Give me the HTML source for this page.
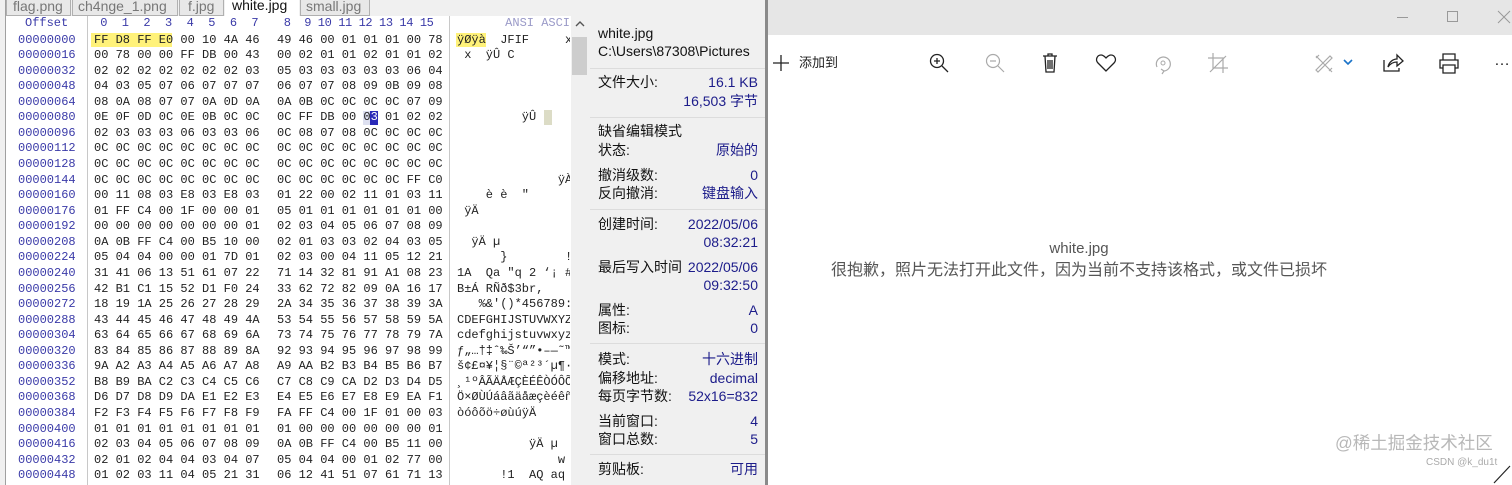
<!DOCTYPE html>
<html><head><meta charset="utf-8">
<style>
*{margin:0;padding:0;box-sizing:border-box}
body{width:1512px;height:485px;overflow:hidden;background:#fff;position:relative;font-family:"Liberation Sans","Noto Sans CJK SC",sans-serif}
.a{position:absolute;white-space:pre}
.m{font-family:"Liberation Mono",monospace;font-size:12px;line-height:15.56px}
.off{color:#3a3aa8}
.hx{color:#222}
.pl{font-family:"Liberation Sans","Noto Sans CJK SC",sans-serif;font-size:14px;color:#111;line-height:18px}
.pv{color:#1c1c8a;text-align:right;right:0}
.sep{position:absolute;left:590px;width:175px;height:1px;background:#dcdcdc}
svg{position:absolute}
</style></head><body>
<div class="a" style="left:0;top:0;width:768px;height:16px;background:#f0f0f0"></div>
<div class="a" style="left:0;top:0;width:6px;height:485px;background:#f0f0f0;border-right:1px solid #a0a0a0"></div>
<div class="a" style="left:6px;top:-4px;width:65px;height:20px;border:1px solid #b0b0b0;background:#e8e8e8;font-size:14px;color:#777;padding-left:6px;line-height:18px">flag.png</div>
<div class="a" style="left:72px;top:-4px;width:106px;height:20px;border:1px solid #b0b0b0;background:#e8e8e8;font-size:14px;color:#777;padding-left:5px;line-height:18px">ch4nge_1.png</div>
<div class="a" style="left:179px;top:-4px;width:45px;height:20px;border:1px solid #b0b0b0;background:#e8e8e8;font-size:14px;color:#777;padding-left:8px;line-height:18px">f.jpg</div>
<div class="a" style="left:225px;top:-4px;width:74px;height:21px;background:#fff;font-size:14px;color:#111;padding-left:7px;line-height:18px">white.jpg</div>
<div class="a" style="left:300px;top:-4px;width:70px;height:20px;border:1px solid #b0b0b0;background:#e8e8e8;font-size:14px;color:#777;padding-left:5px;line-height:18px">small.jpg</div>
<div class="a" style="left:87px;top:16px;width:1px;height:469px;background:#c8c8c8"></div>
<div class="a" style="left:449px;top:16px;width:1px;height:469px;background:#c8c8c8"></div>
<div class="a m" style="left:25px;top:16px;color:#3a3aa8">Offset</div>
<div class="a m" style="left:93px;top:16px;color:#3a3aa8"> 0  1  2  3  4  5  6  7</div>
<div class="a m" style="left:277px;top:16px;color:#3a3aa8;letter-spacing:-0.4px"> 8  9 10 11 12 13 14 15</div>
<div class="a m" style="left:457px;top:16px;width:113px;overflow:hidden;color:#9a9ac8;text-align:right">   ANSI ASCI</div>
<div class="a" style="left:91px;top:33px;width:81px;height:14px;background:#fff27a"></div>
<div class="a" style="left:456px;top:33px;width:30px;height:14px;background:#fff27a"></div>
<div class="a" style="left:363px;top:111px;width:8px;height:14px;background:#dde0f0"></div>
<div class="a" style="left:370px;top:111px;width:8px;height:14px;background:#2a2ab8"></div>
<div class="a" style="left:544px;top:110px;width:8px;height:15px;background:#dcdcc6"></div>
<div class="a m off" style="left:18px;top:32.5px">00000000
00000016
00000032
00000048
00000064
00000080
00000096
00000112
00000128
00000144
00000160
00000176
00000192
00000208
00000224
00000240
00000256
00000272
00000288
00000304
00000320
00000336
00000352
00000368
00000384
00000400
00000416
00000432
00000448</div>
<div class="a m hx" style="left:94px;top:32.5px">FF D8 FF E0 00 10 4A 46
00 78 00 00 FF DB 00 43
02 02 02 02 02 02 02 03
04 03 05 07 06 07 07 07
08 0A 08 07 07 0A 0D 0A
0E 0F 0D 0C 0E 0B 0C 0C
02 03 03 03 06 03 03 06
0C 0C 0C 0C 0C 0C 0C 0C
0C 0C 0C 0C 0C 0C 0C 0C
0C 0C 0C 0C 0C 0C 0C 0C
00 11 08 03 E8 03 E8 03
01 FF C4 00 1F 00 00 01
00 00 00 00 00 00 00 01
0A 0B FF C4 00 B5 10 00
05 04 04 00 00 01 7D 01
31 41 06 13 51 61 07 22
42 B1 C1 15 52 D1 F0 24
18 19 1A 25 26 27 28 29
43 44 45 46 47 48 49 4A
63 64 65 66 67 68 69 6A
83 84 85 86 87 88 89 8A
9A A2 A3 A4 A5 A6 A7 A8
B8 B9 BA C2 C3 C4 C5 C6
D6 D7 D8 D9 DA E1 E2 E3
F2 F3 F4 F5 F6 F7 F8 F9
01 01 01 01 01 01 01 01
02 03 04 05 06 07 08 09
02 01 02 04 04 03 04 07
01 02 03 11 04 05 21 31</div>
<div class="a m hx" style="left:277px;top:32.5px">49 46 00 01 01 01 00 78
00 02 01 01 02 01 01 02
05 03 03 03 03 03 06 04
06 07 07 08 09 0B 09 08
0A 0B 0C 0C 0C 0C 07 09
0C FF DB 00 0<span style="color:#fff">3</span> 01 02 02
0C 08 07 08 0C 0C 0C 0C
0C 0C 0C 0C 0C 0C 0C 0C
0C 0C 0C 0C 0C 0C 0C 0C
0C 0C 0C 0C 0C 0C FF C0
01 22 00 02 11 01 03 11
05 01 01 01 01 01 01 00
02 03 04 05 06 07 08 09
02 01 03 03 02 04 03 05
02 03 00 04 11 05 12 21
71 14 32 81 91 A1 08 23
33 62 72 82 09 0A 16 17
2A 34 35 36 37 38 39 3A
53 54 55 56 57 58 59 5A
73 74 75 76 77 78 79 7A
92 93 94 95 96 97 98 99
A9 AA B2 B3 B4 B5 B6 B7
C7 C8 C9 CA D2 D3 D4 D5
E4 E5 E6 E7 E8 E9 EA F1
FA FF C4 00 1F 01 00 03
01 00 00 00 00 00 00 01
0A 0B FF C4 00 B5 11 00
05 04 04 00 01 02 77 00
06 12 41 51 07 61 71 13</div>
<div class="a m hx" style="left:457px;top:32.5px;width:113px;overflow:hidden;font-size:12px">ÿØÿà  JFIF     x
 x  ÿÛ C



         ÿÛ



              ÿÀ
    è è  "
 ÿÄ

  ÿÄ µ
      }        !
1A  Qa "q 2 ‘¡ #
B±Á RÑð$3br,
   %&amp;'()*456789:
CDEFGHIJSTUVWXYZ
cdefghijstuvwxyz
ƒ„…†‡ˆ‰Š’“”•–—˜™
š¢£¤¥¦§¨©ª²³´µ¶·
¸¹ºÂÃÄÅÆÇÈÉÊÒÓÔÕ
Ö×ØÙÚáâãäåæçèéêñ
òóôõö÷øùúÿÄ

          ÿÄ µ
              w
      !1  AQ aq</div>
<div class="a" style="left:571px;top:16px;width:17px;height:469px;background:#f0f0f0"></div>
<svg style="left:574px;top:19px" width="12" height="10"><path d="M2 7 L6 3 L10 7" stroke="#555" stroke-width="1.4" fill="none"/></svg>
<div class="a" style="left:572px;top:37px;width:15px;height:38px;background:#cdcdcd"></div>
<div class="a" style="left:588px;top:16px;width:177px;height:469px;background:#f0f0f0"></div>
<div class="a" style="left:765px;top:0;width:3px;height:485px;background:#8a8a8a"></div>
<div class="sep" style="top:68px"></div>
<div class="sep" style="top:117px"></div>
<div class="sep" style="top:209px"></div>
<div class="sep" style="top:343px"></div>
<div class="sep" style="top:454px"></div>
<div class="a" style="left:598px;top:0;width:160px;height:485px">
<div class="a pl" style="left:0;top:24px">white.jpg</div>
<div class="a pl" style="left:0;top:42px">C:\Users\87308\Pictures</div>
<div class="a pl" style="left:0;top:73px">文件大小:</div><div class="a pl pv" style="top:73px">16.1 KB</div>
<div class="a pl pv" style="top:92px">16,503 字节</div>
<div class="a pl" style="left:0;top:122px">缺省编辑模式</div>
<div class="a pl" style="left:0;top:141px">状态:</div><div class="a pl pv" style="top:141px">原始的</div>
<div class="a pl" style="left:0;top:166px">撤消级数:</div><div class="a pl pv" style="top:166px">0</div>
<div class="a pl" style="left:0;top:184px">反向撤消:</div><div class="a pl pv" style="top:184px">键盘输入</div>
<div class="a pl" style="left:0;top:215px">创建时间:</div><div class="a pl pv" style="top:215px">2022/05/06</div>
<div class="a pl pv" style="top:233px">08:32:21</div>
<div class="a pl" style="left:0;top:258px">最后写入时间</div><div class="a pl pv" style="top:258px">2022/05/06</div>
<div class="a pl pv" style="top:276px">09:32:50</div>
<div class="a pl" style="left:0;top:301px">属性:</div><div class="a pl pv" style="top:301px">A</div>
<div class="a pl" style="left:0;top:319px">图标:</div><div class="a pl pv" style="top:319px">0</div>
<div class="a pl" style="left:0;top:350px">模式:</div><div class="a pl pv" style="top:350px">十六进制</div>
<div class="a pl" style="left:0;top:369px">偏移地址:</div><div class="a pl pv" style="top:369px">decimal</div>
<div class="a pl" style="left:0;top:387px">每页字节数:</div><div class="a pl pv" style="top:387px">52x16=832</div>
<div class="a pl" style="left:0;top:412px">当前窗口:</div><div class="a pl pv" style="top:412px">4</div>
<div class="a pl" style="left:0;top:430px">窗口总数:</div><div class="a pl pv" style="top:430px">5</div>
<div class="a pl" style="left:0;top:460px">剪贴板:</div><div class="a pl pv" style="top:460px">可用</div>
</div>
<div class="a" style="left:768px;top:0;width:744px;height:35px;background:#e6e6e6"></div>
<div class="a" style="left:1397px;top:17px;width:11px;height:1px;background:#999"></div>
<div class="a" style="left:1447px;top:11px;width:11px;height:11px;border:1px solid #999"></div>
<svg style="left:1496px;top:10px" width="16" height="14"><path d="M2 1 L14 13 M14 1 L2 13" stroke="#999" stroke-width="1"/></svg>
<svg style="left:772px;top:54px" width="18" height="18"><path d="M9 1 V17 M1 9 H17" stroke="#222" stroke-width="1.3"/></svg>
<div class="a" style="left:799px;top:54px;font-size:13px;color:#222;line-height:17px">添加到</div>
<svg style="left:928px;top:52px" width="22" height="22"><circle cx="9" cy="9" r="6.5" stroke="#222" stroke-width="1.3" fill="none"/><path d="M14 14 L20 20 M9 6 V12 M6 9 H12" stroke="#222" stroke-width="1.3"/></svg>
<svg style="left:984px;top:52px" width="22" height="22"><circle cx="9" cy="9" r="6.5" stroke="#aaa" stroke-width="1.2" fill="none"/><path d="M14 14 L20 20 M6 9 H12" stroke="#aaa" stroke-width="1.2"/></svg>
<svg style="left:1041px;top:52px" width="18" height="22"><path d="M2 4 H16 M7 4 V2 H11 V4 M4 4 L5 20 H13 L14 4 M7 8 V17 M9 8 V17 M11 8 V17" stroke="#222" stroke-width="1.3" fill="none"/></svg>
<svg style="left:1095px;top:53px" width="22" height="20"><path d="M11 18 L3 10 C0 7 2 2 6 2 C8.5 2 10 4 11 5 C12 4 13.5 2 16 2 C20 2 22 7 19 10 Z" stroke="#222" stroke-width="1.3" fill="none"/></svg>
<svg style="left:1152px;top:52px" width="22" height="24"><path d="M5 15 A7 7 0 1 1 12 19" stroke="#aaa" stroke-width="1.2" fill="none"/><path d="M9 17 L12 19 L10 22" stroke="#aaa" stroke-width="1.2" fill="none"/><circle cx="11" cy="11" r="2" stroke="#aaa" fill="none"/></svg>
<svg style="left:1207px;top:52px" width="22" height="22"><path d="M6 1 V16 H21 M1 6 H16 V21 M3 20 L19 4" stroke="#aaa" stroke-width="1.2" fill="none"/></svg>
<svg style="left:1313px;top:52px" width="22" height="22"><path d="M3 18 L17 4 L19 6 L5 20 Z M3 4 L19 20 M3 6 L6 3 M16 19 L19 16" stroke="#aaa" stroke-width="1.2" fill="none"/></svg>
<svg style="left:1342px;top:57px" width="12" height="10"><path d="M2 3 L6 7 L10 3" stroke="#1a73c8" stroke-width="1.6" fill="none"/></svg>
<svg style="left:1382px;top:52px" width="22" height="22"><path d="M2 8 V19 H17 V16 M6 15 C7 10 11 7 15 7 V3 L21 9 L15 14 V10 C11 10 8 12 6 15 Z" stroke="#222" stroke-width="1.3" fill="none"/></svg>
<svg style="left:1438px;top:52px" width="22" height="22"><path d="M5 8 V2 H17 V8 M5 16 H2 V8 H20 V16 H17 M5 13 H17 V21 H5 Z" stroke="#222" stroke-width="1.3" fill="none"/></svg>
<div class="a" style="left:1494px;top:52px;font-size:16px;color:#222">…</div>
<div class="a" style="left:979px;top:239px;width:200px;text-align:center;font-size:15px;color:#555;line-height:20px">white.jpg</div>
<div class="a" style="left:779px;top:261px;width:600px;text-align:center;font-size:16px;color:#555;line-height:20px">很抱歉，照片无法打开此文件，因为当前不支持该格式，或文件已损坏</div>
<div class="a" style="left:1335px;top:432px;font-size:17.5px;color:#b8b8b8;line-height:22px">@稀土掘金技术社区</div>
<div class="a" style="left:1426px;top:457px;font-size:10px;color:#aaa;line-height:12px">CSDN @k_du1t</div>
<svg style="left:1492px;top:462px" width="20" height="23"><path d="M2 21 L18 4" stroke="#222" stroke-width="1.2"/></svg>
</body></html>
